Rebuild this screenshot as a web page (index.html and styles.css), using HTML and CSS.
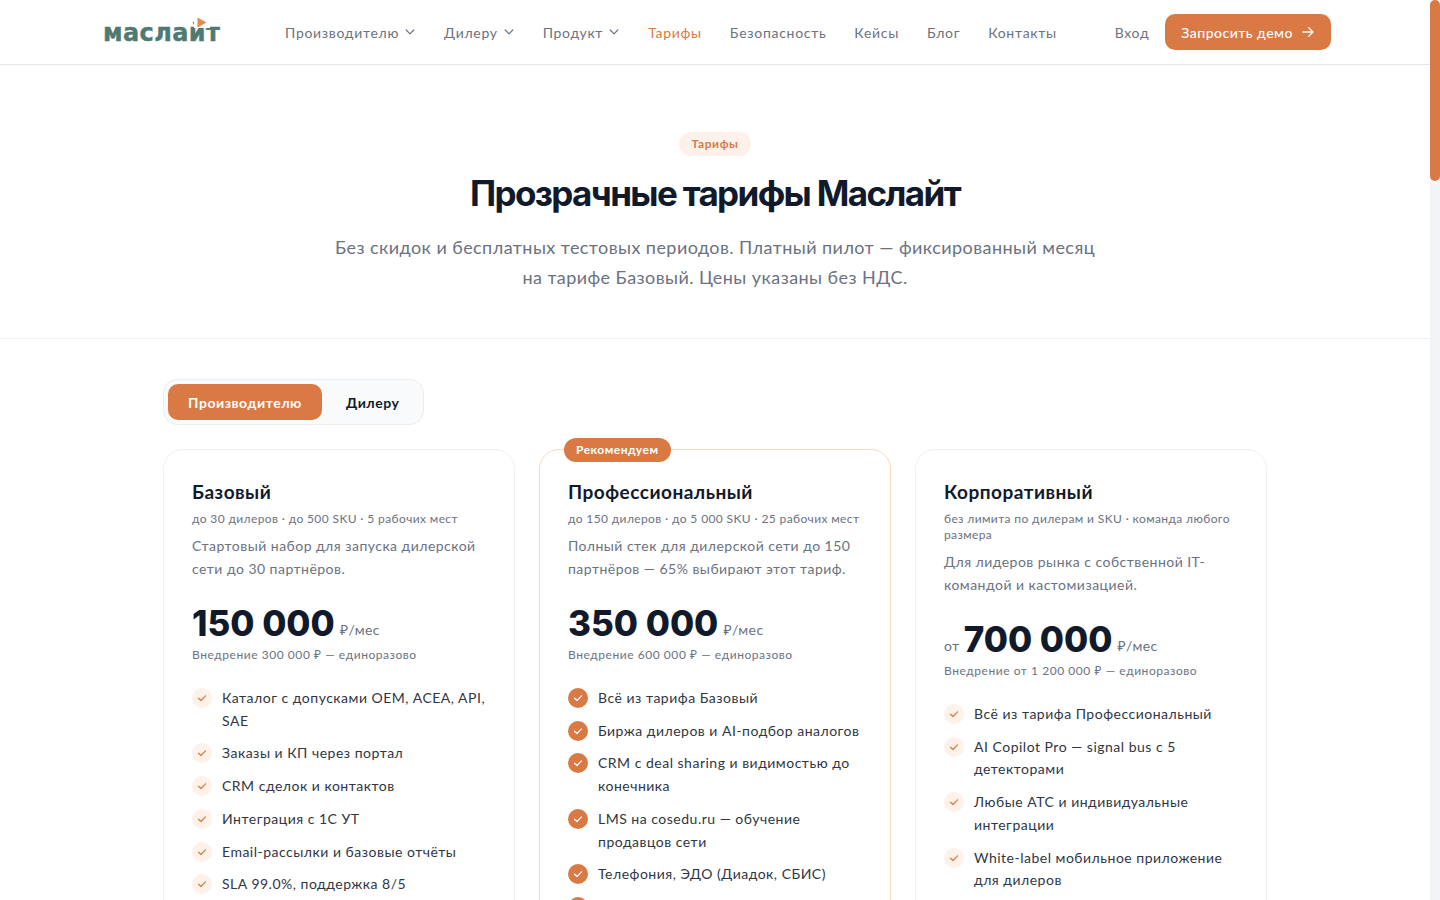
FILE: index.html
```html
<!DOCTYPE html>
<html lang="ru">
<head>
<meta charset="utf-8">
<title>Тарифы — Маслайт</title>
<link rel="stylesheet" href="styles.css">
</head>
<body>
<div class="app">
  <div class="page">
    <header class="topbar">
      <a class="logo" href="#">
        <span class="logo-text">маслайт</span>
        <svg class="logo-mark" width="16" height="11" viewBox="0 0 16 11"><path d="M3.500.5 12.500 5.500 3.500 10.500Z" fill="#e8884f"/></svg>
      </a>
      <nav class="nav">
        <a class="nav-link" href="#">Производителю <svg class="chev" width="12" height="12" viewBox="0 0 12 12"><path d="M2.200 4 6 7.800 9.800 4" fill="none" stroke="currentColor" stroke-width="1.200" stroke-linecap="round" stroke-linejoin="round"/></svg></a>
        <a class="nav-link" href="#">Дилеру <svg class="chev" width="12" height="12" viewBox="0 0 12 12"><path d="M2.200 4 6 7.800 9.800 4" fill="none" stroke="currentColor" stroke-width="1.200" stroke-linecap="round" stroke-linejoin="round"/></svg></a>
        <a class="nav-link" href="#">Продукт <svg class="chev" width="12" height="12" viewBox="0 0 12 12"><path d="M2.200 4 6 7.800 9.800 4" fill="none" stroke="currentColor" stroke-width="1.200" stroke-linecap="round" stroke-linejoin="round"/></svg></a>
        <a class="nav-link active" href="#">Тарифы</a>
        <a class="nav-link" href="#">Безопасность</a>
        <a class="nav-link" href="#">Кейсы</a>
        <a class="nav-link" href="#">Блог</a>
        <a class="nav-link" href="#">Контакты</a>
      </nav>
      <div class="actions">
        <a class="nav-link" href="#">Вход</a>
        <a class="demo" href="#">Запросить демо <svg width="14" height="14" viewBox="0 0 14 14"><path d="M2 7h10M7.600 2.600 12 7l-4.400 4.400" fill="none" stroke="currentColor" stroke-width="1.300" stroke-linecap="round" stroke-linejoin="round"/></svg></a>
      </div>
    </header>

    <section class="hero">
      <span class="pill">Тарифы</span>
      <h1>Прозрачные тарифы Маслайт</h1>
      <p>Без скидок и бесплатных тестовых периодов. Платный пилот — фиксированный месяц<br>на тарифе Базовый. Цены указаны без НДС.</p>
    </section>

    <main class="pricing">
      <div class="tabs">
        <button class="tab on">Производителю</button>
        <button class="tab">Дилеру</button>
      </div>
      <div class="cards">
        <article class="card">
          <h2>Базовый</h2>
          <div class="limits">до 30 дилеров · до 500 SKU · 5 рабочих мест</div>
          <p class="desc">Стартовый набор для запуска дилерской сети до 30 партнёров.</p>
          <div class="price"><b>150 000</b> <span>₽/мес</span></div>
          <div class="setup">Внедрение 300 000 ₽ — единоразово</div>
          <ul class="feats">
            <li><i class="tick"><svg viewBox="0 0 12 12"><path d="M2.500 6.200 5 8.500 9.500 3.800"/></svg></i>Каталог с допусками OEM, ACEA, API, SAE</li>
            <li><i class="tick"><svg viewBox="0 0 12 12"><path d="M2.500 6.200 5 8.500 9.500 3.800"/></svg></i>Заказы и КП через портал</li>
            <li><i class="tick"><svg viewBox="0 0 12 12"><path d="M2.500 6.200 5 8.500 9.500 3.800"/></svg></i>CRM сделок и контактов</li>
            <li><i class="tick"><svg viewBox="0 0 12 12"><path d="M2.500 6.200 5 8.500 9.500 3.800"/></svg></i>Интеграция с 1С УТ</li>
            <li><i class="tick"><svg viewBox="0 0 12 12"><path d="M2.500 6.200 5 8.500 9.500 3.800"/></svg></i>Email-рассылки и базовые отчёты</li>
            <li><i class="tick"><svg viewBox="0 0 12 12"><path d="M2.500 6.200 5 8.500 9.500 3.800"/></svg></i>SLA 99.0%, поддержка 8/5</li>
          </ul>
        </article>
        <article class="card featured">
          <span class="badge">Рекомендуем</span>
          <h2>Профессиональный</h2>
          <div class="limits">до 150 дилеров · до 5 000 SKU · 25 рабочих мест</div>
          <p class="desc">Полный стек для дилерской сети до 150 партнёров — 65% выбирают этот тариф.</p>
          <div class="price"><b>350 000</b> <span>₽/мес</span></div>
          <div class="setup">Внедрение 600 000 ₽ — единоразово</div>
          <ul class="feats">
            <li><i class="tick"><svg viewBox="0 0 12 12"><path d="M2.500 6.200 5 8.500 9.500 3.800"/></svg></i>Всё из тарифа Базовый</li>
            <li><i class="tick"><svg viewBox="0 0 12 12"><path d="M2.500 6.200 5 8.500 9.500 3.800"/></svg></i>Биржа дилеров и AI-подбор аналогов</li>
            <li><i class="tick"><svg viewBox="0 0 12 12"><path d="M2.500 6.200 5 8.500 9.500 3.800"/></svg></i>CRM с deal sharing и видимостью до конечника</li>
            <li><i class="tick"><svg viewBox="0 0 12 12"><path d="M2.500 6.200 5 8.500 9.500 3.800"/></svg></i>LMS на cosedu.ru — обучение продавцов сети</li>
            <li><i class="tick"><svg viewBox="0 0 12 12"><path d="M2.500 6.200 5 8.500 9.500 3.800"/></svg></i>Телефония, ЭДО (Диадок, СБИС)</li>
            <li><i class="tick"><svg viewBox="0 0 12 12"><path d="M2.500 6.200 5 8.500 9.500 3.800"/></svg></i></li>
          </ul>
        </article>
        <article class="card">
          <h2>Корпоративный</h2>
          <div class="limits">без лимита по дилерам и SKU · команда любого размера</div>
          <p class="desc">Для лидеров рынка с собственной IT-командой и кастомизацией.</p>
          <div class="price"><em>от</em> <b>700 000</b> <span>₽/мес</span></div>
          <div class="setup">Внедрение от 1 200 000 ₽ — единоразово</div>
          <ul class="feats">
            <li><i class="tick"><svg viewBox="0 0 12 12"><path d="M2.500 6.200 5 8.500 9.500 3.800"/></svg></i>Всё из тарифа Профессиональный</li>
            <li><i class="tick"><svg viewBox="0 0 12 12"><path d="M2.500 6.200 5 8.500 9.500 3.800"/></svg></i>AI Copilot Pro — signal bus с 5 детекторами</li>
            <li><i class="tick"><svg viewBox="0 0 12 12"><path d="M2.500 6.200 5 8.500 9.500 3.800"/></svg></i>Любые АТС и индивидуальные интеграции</li>
            <li><i class="tick"><svg viewBox="0 0 12 12"><path d="M2.500 6.200 5 8.500 9.500 3.800"/></svg></i>White-label мобильное приложение для дилеров</li>
          </ul>
        </article>
      </div>
    </main>
  </div>
  <div class="scrollbar"><div class="thumb"></div></div>
</div>
</body>
</html>
```

FILE: styles.css
```css
* { box-sizing: border-box; }
html, body { margin: 0; height: 100%; overflow: hidden; background: #fff; }
body { font-family: "Lato", "Noto Sans", sans-serif; color: #111a2b; }
a { text-decoration: none; color: inherit; }

.app { display: flex; height: 900px; }
.page { flex: 1; min-width: 0; overflow: hidden; }
.scrollbar { width: 10px; flex: none; background: #f3f4f6; }
.thumb { height: 181px; background: #d97a45; border-radius: 5px; }

.topbar { height: 65px; border-bottom: 1px solid #e5e7eb; display: flex; align-items: center; padding: 0 99px 0 104px; }
.logo { position: relative; display: block; width: 116px; height: 30px; flex: none; }
.logo-text { position: absolute; left: -1px; top: 1px; font: 700 24px/30px "DejaVu Sans", sans-serif; letter-spacing: .4px; -webkit-text-stroke: .4px #4f7a72; color: #4f7a72; }
.logo-mark { position: absolute; left: 90px; top: 0; background: #fff; }
.nav { display: flex; align-items: center; gap: 28px; margin-left: 65px; }
.nav-link { display: flex; align-items: center; gap: 5px; padding-top: 2px; font-size: 14px; line-height: 20px; letter-spacing: .7px; color: #6b7280; white-space: nowrap; }
.chev { margin-top: -2px; }
.nav-link.active { color: #d97a45; }
.actions { margin-left: auto; display: flex; align-items: center; gap: 16px; }
.demo { display: flex; align-items: center; gap: 8px; height: 36px; padding: 0 16px; border-radius: 10px; background: #d97a45; color: #fff; font-size: 14px; font-weight: 500; letter-spacing: .5px; white-space: nowrap; }

.hero { height: 274px; border-bottom: 1px solid #f0f1f3; padding-top: 67px; text-align: center; }
.pill { display: inline-block; height: 24px; padding: 0 12px; border-radius: 12px; background: #fdf1ea; color: #d97a45; font-size: 12px; line-height: 24px; font-weight: 700; letter-spacing: .6px; }
.hero h1 { margin: 15px 0 0; font: 700 35px/44px "Inter", sans-serif; letter-spacing: -1.650px; color: #111a2b; }
.hero p { margin: 17px 0 0; font-size: 18px; line-height: 30px; letter-spacing: .43px; color: #6b7280; }

.pricing { padding: 40px 163px 0; }
.tabs { display: inline-flex; gap: 4px; padding: 4px; border: 1px solid #eceef0; border-radius: 14px; background: #f9fafb; }
.tab { height: 36px; padding: 1px 19px 0 20px; border: 0; border-radius: 10px; background: transparent; font: 700 14px/35px "Lato", sans-serif; color: #111a2b; letter-spacing: .55px; }
.tab.on { background: #d97a45; color: #fff; padding-right: 20px; }

.cards { display: grid; grid-template-columns: repeat(3, 352px); gap: 24px; margin-top: 24px; align-items: start; }
.card { position: relative; height: 700px; padding: 31px 28px; border: 1px solid #eff0f2; border-radius: 20px; background: #fff; }
.card.featured { border-color: #f7d9c6; }
.badge { position: absolute; left: 24px; top: -12px; height: 24px; padding: 0 12px; border-radius: 12px; background: #d97a45; color: #fff; font-size: 12px; line-height: 24px; font-weight: 700; letter-spacing: .5px; white-space: nowrap; }
.card h2 { margin: 0; font-size: 19px; line-height: 22px; font-weight: 700; letter-spacing: .5px; color: #111a2b; }
.limits { margin-top: 8px; font-size: 12px; line-height: 16px; letter-spacing: .38px; color: #6b7280; }
.desc { margin: 8px 0 0; font-size: 14px; line-height: 22.750px; letter-spacing: .47px; color: #6b7280; }
.price { margin-top: 20px; line-height: 44px; height: 44px; white-space: nowrap; color: #6b7280; }
.price b { font: 800 35px/44px "Inter", sans-serif; color: #111a2b; }
.price span, .price em { font-size: 14px; font-style: normal; letter-spacing: .4px; vertical-align: 1px; }
.price span { margin-left: 1px; }
.setup { margin-top: 2px; font-size: 12px; line-height: 16px; letter-spacing: .55px; color: #6b7280; }
.feats { list-style: none; margin: 24.300px 0 0; padding: 0; display: flex; flex-direction: column; gap: 10px; }
.feats li { position: relative; min-height: 22.750px; padding-left: 30px; font-size: 14px; line-height: 22.750px; letter-spacing: .5px; color: #2f3644; }
.tick { position: absolute; left: 0; top: 1px; width: 20px; height: 20px; border-radius: 50%; background: #fdf1ea; display: flex; align-items: center; justify-content: center; }
.tick svg { width: 12px; height: 12px; fill: none; stroke: #d97a45; stroke-width: 1.200; stroke-linecap: round; stroke-linejoin: round; }
.featured .tick { background: #d97a45; }
.featured .tick svg { stroke: #fff; }
```
